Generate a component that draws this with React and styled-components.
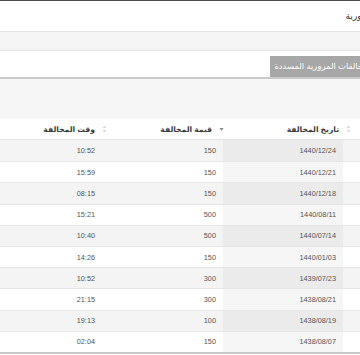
import styled, { createGlobalStyle } from 'styled-components';

const GlobalStyle = createGlobalStyle`
  html, body {
    margin: 0;
    padding: 0;
    background: #fff;
    overflow: hidden;
  }
  body {
    font-family: "Liberation Sans", "DejaVu Sans", sans-serif;
  }
`;

const Page = styled.div`
  direction: rtl;
  width: 375px;
  border-top: 1px solid #4d4d4d;
`;

const TitleBar = styled.div`
  height: 30px;
  display: flex;
  align-items: center;
`;

const Title = styled.h1`
  margin: 0 -42px 0 0;
  font-size: 9px;
  font-weight: normal;
  color: #333;
  white-space: nowrap;
`;

const FilterStrip = styled.div`
  height: 18px;
  background: #f5f5f5;
  border-top: 1px solid #e2e2e2;
  border-bottom: 1px solid #e2e2e2;
`;

const TabBar = styled.div`
  display: flex;
  padding-top: 5px;
  border-bottom: 2px solid #c9c9c9;
`;

const Tab = styled.div`
  height: 21px;
  line-height: 21px;
  margin-right: -4px;
  padding: 0 6px 0 4px;
  background: #a7a7a7;
  color: #fff;
  font-size: 8.4px;
  white-space: nowrap;
`;

const Toolbar = styled.div`
  height: 40px;
  background: #f6f6f6;
`;

const HeadRow = styled.div`
  display: grid;
  grid-template-columns: 20px 127px 117px 1fr;
  height: 21px;
  background: #fff;
  border-bottom: 1px solid #e3e3e3;
  box-sizing: border-box;
`;

const HeadCell = styled.div`
  display: flex;
  align-items: center;
  gap: 7px;
  padding-right: 4px;
  font-size: 7.6px;
  font-weight: bold;
  color: #3a3a3a;
  white-space: nowrap;
`;

const Body = styled.div`
  border-bottom: 2px solid #c9c9c9;
`;

const Row = styled.div`
  display: grid;
  grid-template-columns: 32px 120px 121px 1fr;
  height: 21.2px;
  box-sizing: border-box;
  border-top: ${({ $first }) => ($first ? 'none' : '1px solid #e6e6e6')};
  background: ${({ $odd }) => ($odd ? '#f4f4f4' : '#fff')};
`;

const Cell = styled.div`
  display: flex;
  align-items: center;
  padding-right: 7px;
  font-size: 7.3px;
  color: #555;
  background: ${({ $sorted }) => ($sorted ? 'rgba(0,0,0,0.035)' : 'transparent')};
`;

const Both = () => (
  <svg width="5" height="8" viewBox="0 0 5 8">
    <path d="M2.5 0.5 L4.5 3 L0.5 3 Z" fill="#d9d9d9" />
    <path d="M2.5 7.5 L4.5 5 L0.5 5 Z" fill="#d9d9d9" />
  </svg>
);

const Desc = () => (
  <svg width="5" height="8" viewBox="0 0 5 8">
    <path d="M2.5 6 L4.5 3 L0.5 3 Z" fill="#8a8a8a" />
  </svg>
);

const rows = [
  ['1440/12/24', '150', '10:52'],
  ['1440/12/21', '150', '15:59'],
  ['1440/12/18', '150', '08:15'],
  ['1440/08/11', '500', '15:21'],
  ['1440/07/14', '500', '10:40'],
  ['1440/01/03', '150', '14:26'],
  ['1439/07/23', '300', '10:52'],
  ['1438/08/21', '300', '21:15'],
  ['1438/08/19', '100', '19:13'],
  ['1438/08/07', '150', '02:04'],
];

const App = () => {
  return (
    <>
      <GlobalStyle />
      <Page>
        <TitleBar>
          <Title>المخالفات المرورية</Title>
        </TitleBar>
        <FilterStrip />
        <TabBar>
          <Tab>المخالفات المرورية المسددة</Tab>
        </TabBar>
        <Toolbar />
        <HeadRow>
          <HeadCell />
          <HeadCell><Both />تاريخ المخالفة</HeadCell>
          <HeadCell><Desc />قيمة المخالفة</HeadCell>
          <HeadCell><Both />وقت المخالفة</HeadCell>
        </HeadRow>
        <Body>
          {rows.map(([date, amount, time], i) => (
            <Row key={i} $odd={i % 2 === 0} $first={i === 0}>
              <Cell />
              <Cell $sorted>{date}</Cell>
              <Cell>{amount}</Cell>
              <Cell>{time}</Cell>
            </Row>
          ))}
        </Body>
      </Page>
    </>
  );
};

export default App;
